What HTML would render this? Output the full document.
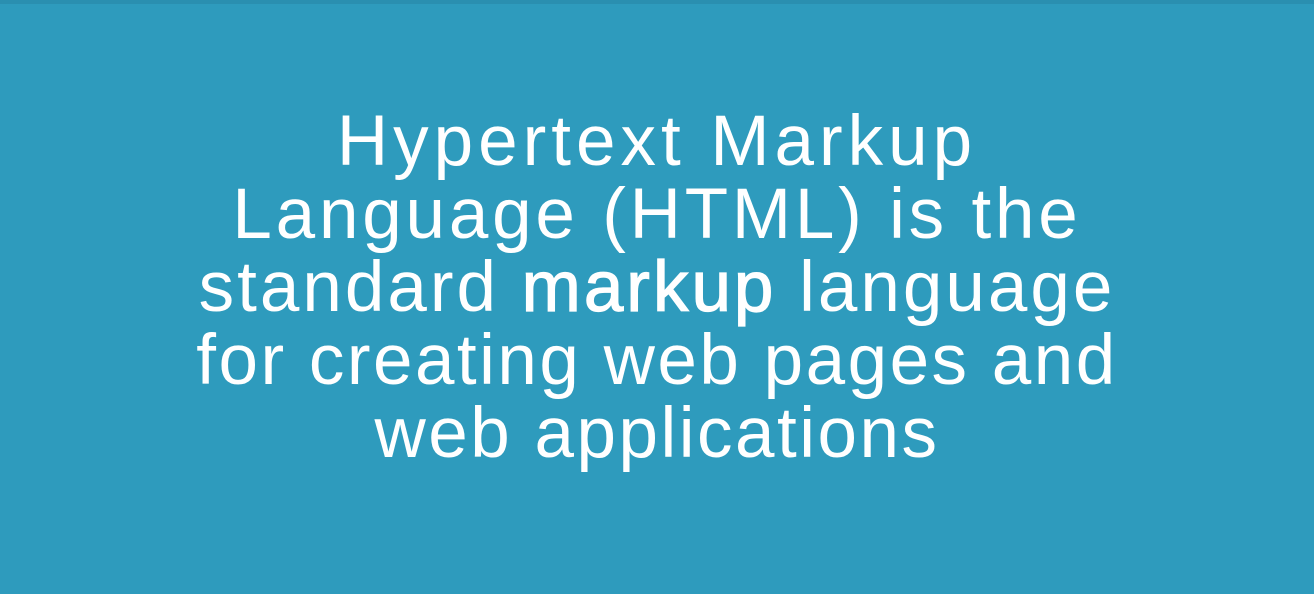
<!DOCTYPE html>
<html><head><meta charset="utf-8"><style>
html,body{margin:0;padding:0;}
body{width:1314px;height:594px;background:#2e9bbd;position:relative;overflow:hidden;font-family:"Liberation Sans",sans-serif;color:#fff;}
.top{position:absolute;left:0;top:0;width:100%;height:4px;background:#2a8fb0;}
.t{position:absolute;left:0;top:105px;width:1314px;text-align:center;font-size:71px;line-height:73px;}
.t div{white-space:nowrap;}
b{font-weight:normal;-webkit-text-stroke:1.2px #fff;}
</style></head><body>
<div class="top"></div>
<div class="t">
<div style="letter-spacing:5px">Hypertext Markup</div>
<div style="letter-spacing:3.8px">Language (HTML) is the</div>
<div style="letter-spacing:3px">standard <b>markup</b> language</div>
<div style="letter-spacing:2.5px">for creating web pages and</div>
<div style="letter-spacing:2.5px">web applications</div>
</div>
</body></html>
